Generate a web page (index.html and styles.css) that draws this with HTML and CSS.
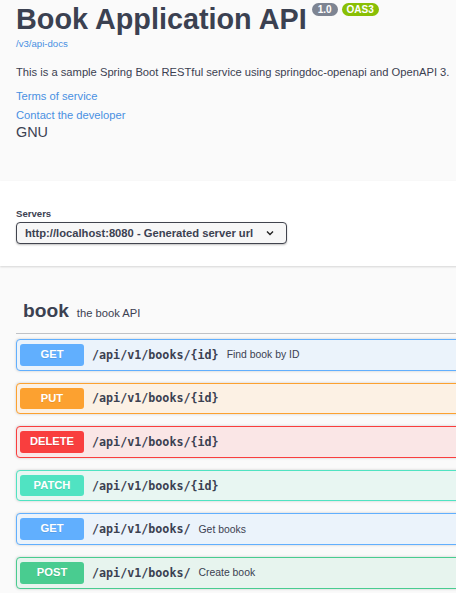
FILE: index.html
```html
<!DOCTYPE html>
<html lang="en">
<head>
<meta charset="utf-8">
<title>Book Application API</title>
<link rel="stylesheet" href="styles.css">
</head>
<body>
<div class="page">
  <section class="info">
    <div class="title-row">
      <h1 class="title">Book Application API</h1>
      <span class="badge badge-ver">1.0</span>
      <span class="badge badge-oas">OAS3</span>
    </div>
    <a class="url" href="#">/v3/api-docs</a>
    <p class="desc">This is a sample Spring Boot RESTful service using springdoc-openapi and OpenAPI 3.</p>
    <a class="link link-terms" href="#">Terms of service</a>
    <a class="link link-contact" href="#">Contact the developer</a>
    <div class="license">GNU</div>
  </section>

  <section class="schemes">
    <div class="servers-label">Servers</div>
    <div class="select">
      <span class="select-text">http://localhost:8080 - Generated server url</span>
      <svg class="chevron" width="8" height="6" viewBox="0 0 8 6"><path d="M1 1.5 L4 4.5 L7 1.5" fill="none" stroke="#222" stroke-width="1.4"/></svg>
    </div>
  </section>

  <section class="ops">
    <div class="tag">
      <h3 class="tag-name">book</h3>
      <span class="tag-desc">the book API</span>
    </div>

    <div class="op op-get">
      <span class="method">GET</span>
      <span class="path">/api/v1/books/{id}</span>
      <span class="summary">Find book by ID</span>
    </div>
    <div class="op op-put">
      <span class="method">PUT</span>
      <span class="path">/api/v1/books/{id}</span>
    </div>
    <div class="op op-delete">
      <span class="method">DELETE</span>
      <span class="path">/api/v1/books/{id}</span>
    </div>
    <div class="op op-patch">
      <span class="method">PATCH</span>
      <span class="path">/api/v1/books/{id}</span>
    </div>
    <div class="op op-get">
      <span class="method">GET</span>
      <span class="path">/api/v1/books/</span>
      <span class="summary">Get books</span>
    </div>
    <div class="op op-post">
      <span class="method">POST</span>
      <span class="path">/api/v1/books/</span>
      <span class="summary">Create book</span>
    </div>
  </section>
</div>
</body>
</html>
```

FILE: styles.css
```css
html, body {
  margin: 0;
  padding: 0;
  overflow: hidden;
  background: #fafafa;
}

body {
  font-family: "Liberation Sans", Arial, sans-serif;
  color: #3b4151;
}

.page {
  width: 640px;
}

/* ---------- info ---------- */
.info {
  padding: 3px 16px 40px;
  display: flex;
  flex-direction: column;
  align-items: flex-start;
}

.title-row {
  display: flex;
  align-items: flex-start;
}

.title {
  margin: 0;
  font-size: 28.8px;
  line-height: 33px;
  font-weight: 700;
  color: #3b4151;
}

.badge {
  display: inline-block;
  margin-left: 4px;
  height: 13px;
  line-height: 13px;
  border-radius: 46px;
  font-size: 10px;
  font-weight: 700;
  color: #fff;
  margin-top: 0;
}

.badge-ver {
  background: #7d8492;
  margin-left: 5px;
  padding: 0 6px;
}

.badge-oas {
  background: #89bf04;
  padding: 0 5px;
}

.url {
  margin-top: 2px;
  font-size: 9.6px;
  line-height: 11px;
  color: #4990e2;
  text-decoration: none;
}

.desc {
  margin: 17px 0 0;
  font-size: 11.2px;
  line-height: 13px;
  color: #3b4151;
}

.link {
  font-size: 11.2px;
  line-height: 13px;
  color: #4990e2;
  text-decoration: none;
}

.link-terms {
  margin-top: 11px;
}

.link-contact {
  margin-top: 6px;
}

.license {
  margin-top: 2px;
  font-size: 14.4px;
  line-height: 17px;
  color: #3b4151;
}

/* ---------- servers ---------- */
.schemes {
  background: #fff;
  box-shadow: 0 1px 2px 0 rgba(0, 0, 0, 0.15);
  padding: 27px 16px 22px;
}

.servers-label {
  font-size: 9.6px;
  line-height: 11px;
  font-weight: 700;
  color: #3b4151;
  margin-bottom: 3px;
}

.select {
  display: inline-flex;
  align-items: center;
  height: 20px;
  padding: 0 12px 0 8px;
  border: 1px solid #41444e;
  border-radius: 4px;
  box-shadow: 0 1px 2px 0 rgba(0, 0, 0, 0.25);
  background: #f7f7f7;
  font-size: 11.2px;
  font-weight: 700;
  color: #3b4151;
}

.select-text {
  margin-right: 13px;
}

/* ---------- operations ---------- */
.ops {
  padding: 22px 16px 0;
}

.tag {
  display: flex;
  align-items: baseline;
  padding: 12px 0 11px 7px;
  border-bottom: 1px solid rgba(59, 65, 81, 0.3);
  margin-bottom: 5px;
}

.tag-name {
  margin: 0;
  font-size: 19.2px;
  line-height: 22px;
  font-weight: 700;
  color: #3b4151;
}

.tag-desc {
  margin-left: 8px;
  font-size: 11.2px;
  color: #3b4151;
}

.op {
  display: flex;
  align-items: center;
  padding: 4px 3px;
  border: 1px solid;
  border-radius: 4px;
  box-shadow: 0 0 3px rgba(0, 0, 0, 0.19);
  margin-bottom: 12px;
}

.method {
  min-width: 64px;
  box-sizing: border-box;
  padding: 0 8px;
  height: 21.6px;
  line-height: 21.6px;
  border-radius: 3px;
  text-align: center;
  font-size: 11.2px;
  font-weight: 700;
  color: #fff;
  text-shadow: 0 1px 0 rgba(0, 0, 0, 0.1);
}

.path {
  margin-left: 8px;
  font-family: "DejaVu Sans Mono", "Liberation Mono", monospace;
  font-size: 11.7px;
  font-weight: 700;
  color: #3b4151;
}

.summary {
  margin-left: 8px;
  font-size: 10.4px;
  color: #3b4151;
}

.op-get { border-color: #61affe; background: #ebf3fb; }
.op-get .method { background: #61affe; }

.op-put { border-color: #fca130; background: #fcf1e4; }
.op-put .method { background: #fca130; }

.op-delete { border-color: #f93e3e; background: #fae6e6; }
.op-delete .method { background: #f93e3e; }

.op-patch { border-color: #50e3c2; background: #e8f6f2; }
.op-patch .method { background: #50e3c2; }

.op-post { border-color: #49cc90; background: #e7f4ee; }
.op-post .method { background: #49cc90; }
```
